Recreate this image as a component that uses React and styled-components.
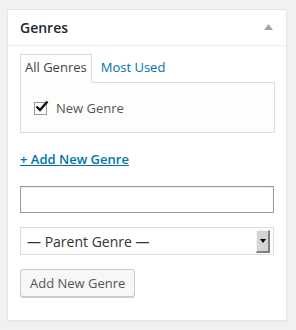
import React from "react";
import styled, { createGlobalStyle } from "styled-components";

const Global = createGlobalStyle`
  html, body { margin: 0; padding: 0; background: #f1f1f1; }
  body { font-family: "Open Sans", "Liberation Sans", sans-serif; font-size: 13px; color: #444; }
`;

const Page = styled.div`
  padding: 9px 9px 8px 7px;
`;

const Box = styled.div`
  width: 280px;
  box-sizing: border-box;
  background: #fff;
  border: 1px solid #e5e5e5;
  box-shadow: 0 1px 1px rgba(0, 0, 0, 0.04);
`;

const Header = styled.div`
  display: flex;
  align-items: center;
  justify-content: space-between;
  height: 35px;
  padding: 0 13px 0 12px;
  border-bottom: 1px solid #eee;
`;

const Title = styled.h2`
  margin: 0;
  font-size: 14px;
  font-weight: 600;
  color: #23282d;
  line-height: 20px;
`;

const Toggle = styled.svg`
  width: 9px;
  height: 6px;
  display: block;
  margin-top: -1px;
`;

const Inside = styled.div`
  padding: 8px 11px 23px 12px;
  display: flex;
  flex-direction: column;
  align-items: flex-start;
`;

const Tabs = styled.ul`
  display: flex;
  align-items: flex-end;
  gap: 4px;
  margin: 0;
  padding: 0;
  list-style: none;
  position: relative;
  z-index: 1;
  margin-bottom: -1px;
`;

const Tab = styled.li`
  padding: 3px 4px 5px;
  line-height: 19px;
  font-size: 13px;
  border: 1px solid ${(p) => (p.$active ? "#ddd" : "transparent")};
  border-bottom: 1px solid ${(p) => (p.$active ? "#fdfdfd" : "transparent")};
  background: ${(p) => (p.$active ? "#fdfdfd" : "transparent")};
  color: ${(p) => (p.$active ? "#444" : "#0073aa")};
`;

const Panel = styled.div`
  width: 255px;
  box-sizing: border-box;
  background: #fdfdfd;
  border: 1px solid #ddd;
  padding: 14px 12px 13px 13px;
`;

const Item = styled.label`
  display: flex;
  align-items: center;
  gap: 9px;
  line-height: 22px;
  font-size: 13px;
  color: #555;
`;

const CheckBox = styled.span`
  position: relative;
  width: 11px;
  height: 11px;
  border: 1px solid #9a9a9a;
  background: #fff;
  flex: none;
  margin-top: 1px;
`;

const CheckMark = styled.svg`
  position: absolute;
  left: 0px;
  top: -3px;
  width: 14px;
  height: 13px;
`;

const AddLink = styled.a`
  margin-top: 16px;
  line-height: 20px;
  font-size: 13px;
  font-weight: 600;
  color: #0073aa;
  text-decoration: underline;
`;

const TextInput = styled.input`
  margin-top: 17px;
  width: 254px;
  height: 27px;
  box-sizing: border-box;
  border: 1px solid #9a9a9a;
  background: #fff;
  box-shadow: inset 0 1px 2px rgba(0, 0, 0, 0.07);
  font-family: inherit;
  font-size: 14px;
  padding: 3px 5px;
  outline: none;
`;

const Select = styled.div`
  margin-top: 14px;
  width: 254px;
  height: 28px;
  box-sizing: border-box;
  border: 1px solid #ddd;
  background: #fff;
  display: flex;
  align-items: center;
  justify-content: space-between;
  padding: 1px 3px 1px 6px;
  font-size: 14px;
  color: #333;
`;

const SelectArrow = styled.span`
  width: 14px;
  height: 23px;
  box-sizing: border-box;
  background: #d4d4d4;
  border-top: 1px solid #f4f4f4;
  border-left: 1px solid #f4f4f4;
  border-right: 2px solid #808080;
  border-bottom: 2px solid #808080;
  display: flex;
  align-items: center;
  justify-content: center;
`;

const Button = styled.button`
  margin-top: 14px;
  height: 28px;
  box-sizing: border-box;
  padding: 0 9px 1px;
  border: 1px solid #ccc;
  border-radius: 3px;
  background: #f7f7f7;
  box-shadow: 0 1px 0 #ccc;
  color: #555;
  font-family: inherit;
  font-size: 13px;
  line-height: 26px;
`;

export default function App() {
  return (
    <>
      <Global />
      <Page>
        <Box>
          <Header>
            <Title>Genres</Title>
            <Toggle viewBox="0 0 9 6">
              <polygon points="4.5,0 9,6 0,6" fill="#a0a5aa" />
            </Toggle>
          </Header>
          <Inside>
            <Tabs>
              <Tab $active>All Genres</Tab>
              <Tab>Most Used</Tab>
            </Tabs>
            <Panel>
              <Item>
                <CheckBox>
                  <CheckMark viewBox="0 0 14 13">
                    <path d="M1.5 6.5 L5 10 L12.5 1.5" stroke="#111" strokeWidth="2.4" fill="none" />
                  </CheckMark>
                </CheckBox>
                New Genre
              </Item>
            </Panel>
            <AddLink href="#">+ Add New Genre</AddLink>
            <TextInput type="text" />
            <Select>
              <span>— Parent Genre —</span>
              <SelectArrow>
                <svg width="6" height="4" viewBox="0 0 6 4">
                  <polygon points="0,0 6,0 3,4" fill="#000" />
                </svg>
              </SelectArrow>
            </Select>
            <Button>Add New Genre</Button>
          </Inside>
        </Box>
      </Page>
    </>
  );
}
